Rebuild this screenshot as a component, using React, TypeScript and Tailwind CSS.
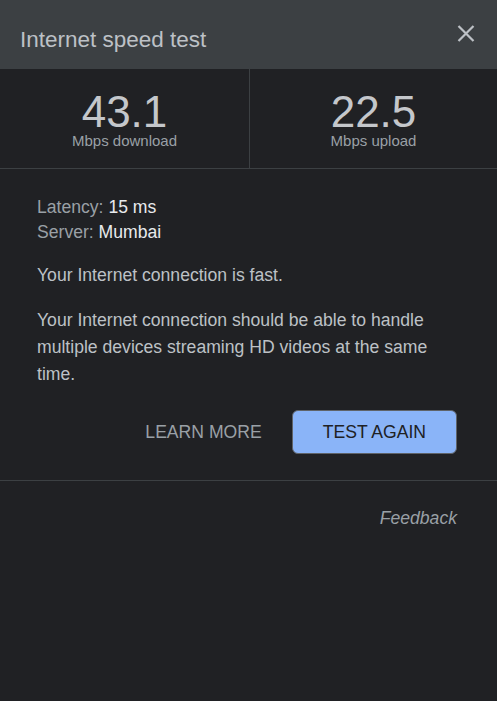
import React from "react";

export default function App() {
  return (
    <div
      className="w-[497px] h-[701px] bg-[#202124] overflow-hidden"
      style={{ fontFamily: '"Liberation Sans", Arial, sans-serif' }}
    >
      <div className="h-[69px] bg-[#3c4043] flex justify-between items-start pl-5 pr-[22px]">
        <div className="pt-[26px] text-[22.5px] leading-[28px] text-[#bdc1c6]">
          Internet speed test
        </div>
        <button className="mt-[24px] w-[18px] h-[18px] flex items-center justify-center">
          <svg width="18" height="17" viewBox="0 0 18 17">
            <path
              d="M1.5 1 L16.5 16 M16.5 1 L1.5 16"
              stroke="#bdc1c6"
              strokeWidth="2.2"
              fill="none"
            />
          </svg>
        </button>
      </div>

      <div className="h-[100px] flex border-b border-[#3c4043]">
        <div className="w-[250px] border-r border-[#3c4043] flex flex-col items-center pt-[21px]">
          <div className="text-[44px] leading-[44px] text-[#c4c7cb]">43.1</div>
          <div className="text-[15px] leading-[14px] text-[#9aa0a6]">Mbps download</div>
        </div>
        <div className="flex-1 flex flex-col items-center pt-[21px]">
          <div className="text-[44px] leading-[44px] text-[#c4c7cb]">22.5</div>
          <div className="text-[15px] leading-[14px] text-[#9aa0a6]">Mbps upload</div>
        </div>
      </div>

      <div className="pl-[37px] pr-[40px] pt-[26px] pb-[26px] border-b border-[#3c4043] text-[17.6px]">
        <div className="leading-[24.5px]">
          <div>
            <span className="text-[#9aa0a6]">Latency: </span>
            <span className="text-[#e8eaed]">15 ms</span>
          </div>
          <div>
            <span className="text-[#9aa0a6]">Server: </span>
            <span className="text-[#e8eaed]">Mumbai</span>
          </div>
        </div>
        <p className="mt-[18px] leading-[27px] text-[#bdc1c6]">
          Your Internet connection is fast.
        </p>
        <p className="mt-[18px] leading-[27px] text-[#bdc1c6]">
          Your Internet connection should be able to handle multiple devices streaming HD videos at the same time.
        </p>
        <div className="mt-[22px] flex justify-end items-center gap-[30px]">
          <button className="text-[#9aa0a6] leading-[24px]">LEARN MORE</button>
          <button className="h-[44px] px-[30px] rounded-[6px] bg-[#8ab4f8] border border-[#5f6368] text-[#202124] leading-[24px]">
            TEST AGAIN
          </button>
        </div>
      </div>

      <div className="pr-[40px] pt-[25px] flex justify-end">
        <span className="italic text-[17.6px] leading-[24px] text-[#9aa0a6]">Feedback</span>
      </div>
    </div>
  );
}
